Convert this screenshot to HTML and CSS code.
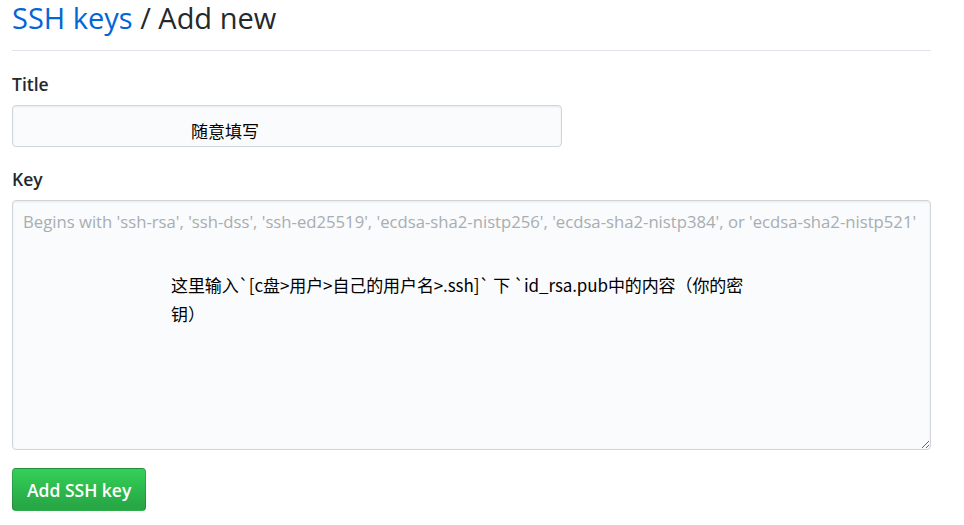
FILE: index.html
```html
<!DOCTYPE html>
<html lang="zh-CN">
<head>
<meta charset="utf-8">
<title>SSH keys / Add new</title>
<link rel="stylesheet" href="styles.css">
</head>
<body>
<main class="page">
  <div class="subhead">
    <h2 class="subhead-heading"><a class="crumb" href="#">SSH keys</a> / Add new</h2>
  </div>
  <form class="key-form">
    <div class="form-group">
      <label class="form-label" for="title">Title</label>
      <div class="field field-title">
        <input class="form-control input-title" id="title" type="text">
        <span class="note note-title">随意填写</span>
      </div>
    </div>
    <div class="form-group">
      <label class="form-label" for="key">Key</label>
      <div class="field field-key">
        <textarea class="form-control input-key" id="key" placeholder="Begins with 'ssh-rsa', 'ssh-dss', 'ssh-ed25519', 'ecdsa-sha2-nistp256', 'ecdsa-sha2-nistp384', or 'ecdsa-sha2-nistp521'"></textarea>
        <p class="note note-key">这里输入`[c盘&gt;用户&gt;自己的用户名&gt;.ssh]` 下 `id_rsa.pub中的内容（你的密钥）</p>
      </div>
    </div>
    <button class="btn-primary" type="button">Add SSH key</button>
  </form>
</main>
</body>
</html>
```
FILE: styles.css
```css
html, body {
  margin: 0;
  padding: 0;
  background: #ffffff;
}

body {
  font-family: "Open Sans", "Noto Sans", "Noto Sans CJK SC", sans-serif;
  color: #24292e;
}

.page {
  width: 919px;
  padding-left: 12px;
}

.subhead {
  border-bottom: 1px solid #e1e4e8;
  padding-top: 1px;
  padding-bottom: 15px;
}

.subhead-heading {
  margin: 0;
  font-size: 29px;
  font-weight: 400;
  line-height: 34px;
}

.crumb {
  color: #0366d6;
  text-decoration: none;
}

.key-form {
  display: flex;
  flex-direction: column;
  align-items: flex-start;
}

.form-group {
  width: 100%;
  margin-top: 21px;
}

.form-group + .form-group {
  margin-top: 20px;
}

.form-label {
  display: block;
  font-size: 17.5px;
  font-weight: 600;
  line-height: 24px;
  margin-bottom: 9px;
}

.field {
  position: relative;
}

.form-control {
  display: block;
  box-sizing: border-box;
  background: #fafbfc;
  border: 1px solid #d1d5da;
  border-radius: 4px;
  box-shadow: inset 0 1px 2px rgba(27, 31, 35, 0.075);
  font-family: "Open Sans", "Noto Sans", sans-serif;
  font-size: 16.7px;
  color: #24292e;
  margin: 0;
}

.input-title {
  width: 550px;
  height: 42px;
  padding: 0 10px;
}

.input-key {
  width: 919px;
  height: 250px;
  padding: 8px 10px;
  line-height: 26px;
  resize: vertical;
}

.input-key::placeholder {
  color: #a8adb2;
}

.note {
  position: absolute;
  margin: 0;
  font-family: "Noto Sans CJK SC", "Open Sans", sans-serif;
  font-size: 17px;
  color: #000000;
  pointer-events: none;
}

.note-title {
  left: 179px;
  top: 14px;
  line-height: 24px;
}

.note-key {
  left: 159px;
  top: 70px;
  width: 584px;
  line-height: 29px;
  letter-spacing: -0.1px;
}

.btn-primary {
  margin-top: 18px;
  height: 43px;
  padding: 0 14px;
  border: 1px solid rgba(27, 31, 35, 0.2);
  border-radius: 4px;
  background: linear-gradient(-180deg, #34d058 0%, #28a745 90%);
  color: #ffffff;
  font-family: "Open Sans", "Noto Sans", sans-serif;
  font-size: 17.5px;
  font-weight: 600;
  cursor: pointer;
}
```
